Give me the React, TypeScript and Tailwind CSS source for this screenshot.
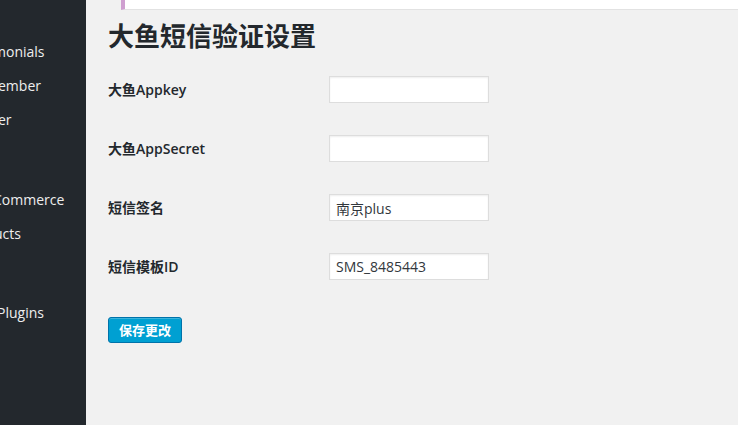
import React from 'react'

const cjk = "font-['Open_Sans','Noto_Sans_CJK_SC',sans-serif]"

function Sidebar() {
  return (
    <aside className={`w-[86px] shrink-0 bg-[#23282d] text-[14px] text-[#eeeeee] overflow-hidden ${cjk}`}>
      <div className="h-[34px]" />
      <div className="h-[34px] flex items-center whitespace-nowrap -ml-[7px]">monials</div>
      <div className="h-[34px] flex items-center whitespace-nowrap -ml-[2px]">ember</div>
      <div className="h-[34px] flex items-center whitespace-nowrap -ml-[2px]">er</div>
      <div className="h-[46px]" />
      <div className="h-[34px] flex items-center whitespace-nowrap -ml-[7px]">Commerce</div>
      <div className="h-[34px] flex items-center whitespace-nowrap -ml-[6px]">ucts</div>
      <div className="h-[45px]" />
      <div className="h-[34px] flex items-center whitespace-nowrap -ml-[3px]">Plugins</div>
    </aside>
  )
}

const rows = [
  { label: '大鱼Appkey', value: '' },
  { label: '大鱼AppSecret', value: '' },
  { label: '短信签名', value: '南京plus' },
  { label: '短信模板ID', value: 'SMS_8485443' },
]

export default function App() {
  return (
    <div className="flex w-[738px] h-[425px] overflow-hidden bg-[#f1f1f1]">
      <Sidebar />
      <main className={`flex-1 pl-[22px] text-[#23282d] ${cjk}`}>
        {/* notice stub at top */}
        <div className="ml-[13px] h-[10px] bg-white border-l-4 border-[#cf9fd0] border-b border-b-[#e2e2e2]" />

        <h1 className="mt-[9px] text-[26px] leading-[34px] font-bold">大鱼短信验证设置</h1>

        <div className="mt-[7px]">
          {rows.map((r) => (
            <div key={r.label} className="h-[59px] flex items-center">
              <div className="w-[221px] text-[14px] font-semibold">{r.label}</div>
              <input
                readOnly
                value={r.value}
                className="w-[160px] h-[27px] bg-white border border-[#dddddd] shadow-[inset_0_1px_2px_rgba(0,0,0,0.07)] px-[6px] text-[14px] text-[#32373c] outline-none"
              />
            </div>
          ))}
        </div>

        <button className="mt-[21px] h-[26px] px-[10px] rounded-[3px] bg-[#00a0d2] border border-[#0073aa] text-white text-[13px] font-semibold leading-[24px] shadow-[inset_0_1px_0_rgba(120,200,230,0.5)]">
          保存更改
        </button>
      </main>
    </div>
  )
}
